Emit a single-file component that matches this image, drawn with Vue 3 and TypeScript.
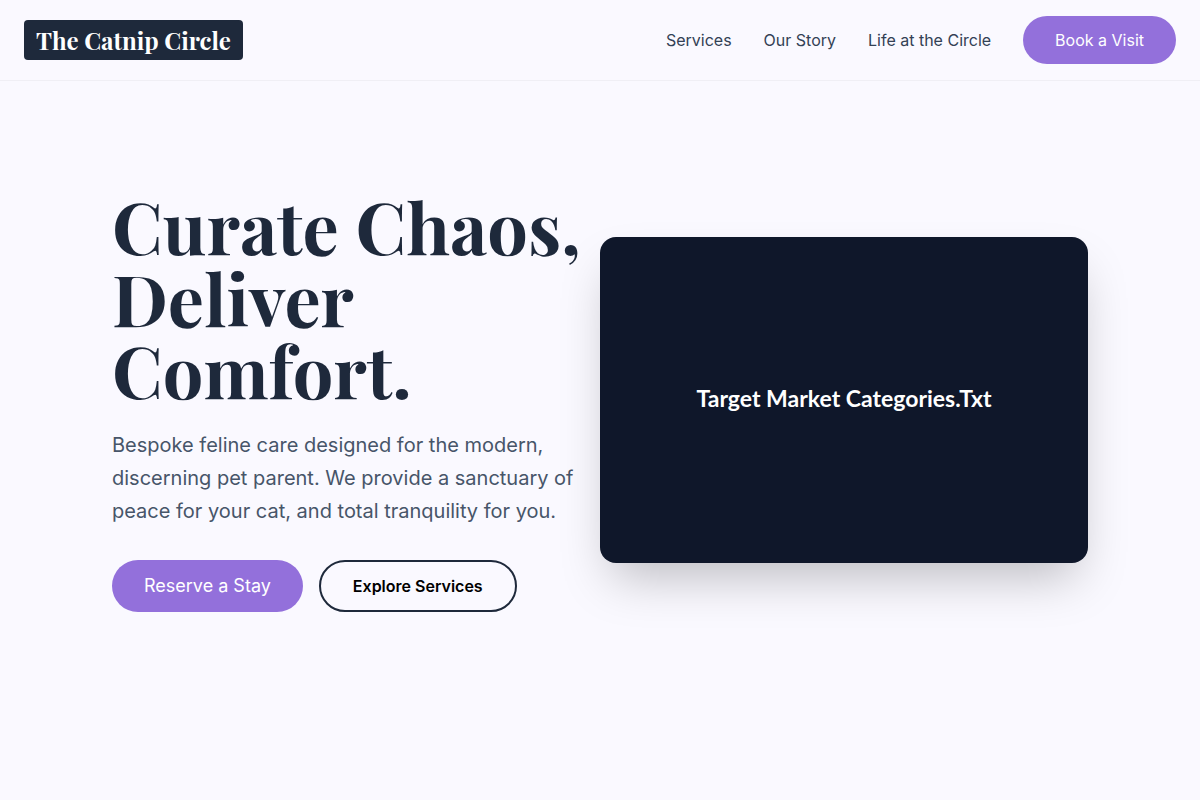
<script setup lang="ts">
interface NavLink {
  label: string
  href: string
}

const links: NavLink[] = [
  { label: 'Services', href: '#services' },
  { label: 'Our Story', href: '#story' },
  { label: 'Life at the Circle', href: '#life' },
]
</script>

<template>
  <div class="page">
    <header class="header">
      <a class="brand" href="#home">The Catnip Circle</a>
      <nav class="nav" aria-label="Main">
        <a v-for="link in links" :key="link.href" class="nav-link" :href="link.href">{{ link.label }}</a>
        <button class="button" type="button">Book a Visit</button>
      </nav>
    </header>
    <main class="hero">
      <div class="copy">
        <h1 class="title">Curate Chaos, Deliver Comfort.</h1>
        <p class="lead">
          Bespoke feline care designed for the modern, discerning pet parent. We provide a sanctuary of peace for your
          cat, and total tranquility for you.
        </p>
        <div class="actions">
          <button class="button reserve" type="button">Reserve a Stay</button>
          <button class="button explore" type="button">Explore Services</button>
        </div>
      </div>
      <div class="media">Target Market Categories.Txt</div>
    </main>
  </div>
</template>

<style>
body {
  margin: 0;
  background: #faf9ff;
}
</style>

<style scoped>
.page,
.page * {
  box-sizing: border-box;
}
.page {
  color: #1e293b;
  font-family: Inter, "Liberation Sans", sans-serif;
}
/* The bar stays over the hero, which is centred in the whole window. */
.header {
  position: fixed;
  top: 0;
  left: 0;
  right: 0;
  z-index: 1;
  display: flex;
  align-items: center;
  justify-content: space-between;
  padding: 16px 24px;
  border-bottom: 1px solid #f0eff5;
  background: #faf9ff;
}
.brand {
  padding: 4px 12px;
  border-radius: 4px;
  background: #1e293b;
  color: #fff;
  font-family: "Playfair Display", "Liberation Serif", serif;
  font-size: 24px;
  line-height: 32px;
  font-weight: 700;
  text-decoration: none;
}
.nav {
  display: flex;
  align-items: center;
  gap: 32px;
}
.nav-link {
  color: #334155;
  font-size: 16px;
  line-height: 24px;
  text-decoration: none;
}
.button {
  padding: 12px 32px;
  border: 0;
  border-radius: 32px;
  background: #9370db;
  color: #fff;
  font-family: inherit;
  font-size: 16px;
  line-height: 24px;
  cursor: pointer;
}
.hero {
  display: grid;
  grid-template-columns: 1fr 1fr;
  align-items: center;
  min-height: 100vh;
  max-width: 1024px;
  margin: 0 auto;
  padding: 0 24px;
}
.title {
  margin: 0 0 24px;
  font-family: "Playfair Display", "Liberation Serif", serif;
  font-size: 72px;
  line-height: 72px;
  font-weight: 700;
}
.lead {
  margin: 0 0 32px;
  color: #475569;
  font-size: 20px;
  line-height: 33px;
}
.actions {
  display: flex;
  gap: 16px;
}
.reserve {
  font-size: 18px;
  line-height: 28px;
}
.explore {
  border: 2px solid #1e293b;
  background: transparent;
  color: #000;
  font-weight: 600;
}
.media {
  display: flex;
  align-items: center;
  justify-content: center;
  aspect-ratio: 3 / 2;
  padding-bottom: 4px;
  border-radius: 16px;
  background: #0f172a;
  color: #fff;
  font-family: Lato, "Open Sans", sans-serif;
  font-size: 23px;
  font-weight: 700;
  box-shadow: 0 25px 50px -12px rgba(0, 0, 0, 0.25);
}
</style>
